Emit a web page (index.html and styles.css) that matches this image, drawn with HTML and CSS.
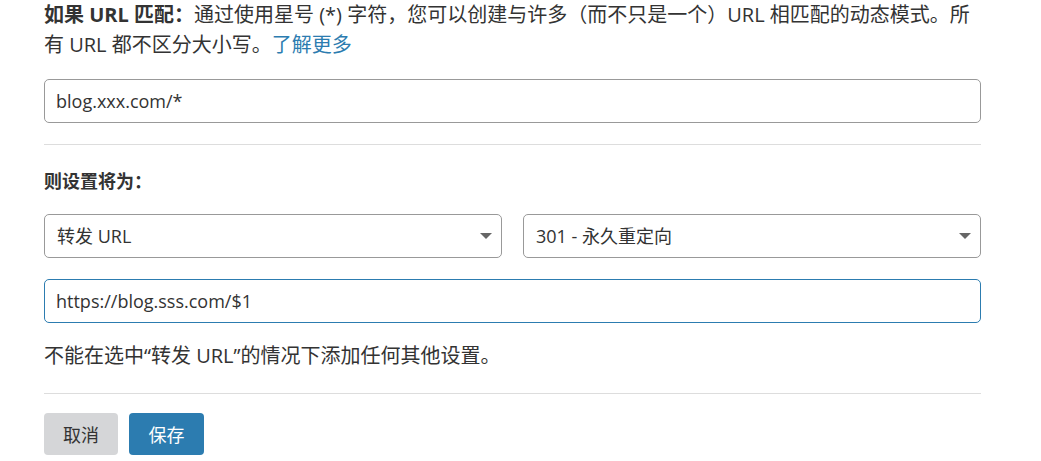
FILE: index.html
```html
<!DOCTYPE html>
<html lang="zh-CN">
<head>
    <meta charset="UTF-8">
    <meta name="viewport" content="width=device-width, initial-scale=1.0">
    <title>页面规则</title>
    <link rel="stylesheet" href="styles.css">
</head>
<body>
    <div class="rule-form">
        <p class="rule-desc">
            <strong>如果 URL 匹配：</strong>通过使用星号 (*) 字符，您可以创建与许多（而不只是一个）URL 相匹配的动态模式。所有 URL 都不区分大小写。<a href="#">了解更多</a>
        </p>

        <input type="text" class="text-input" value="blog.xxx.com/*">

        <hr class="divider divider-top">

        <label class="section-label">则设置将为：</label>

        <div class="select-group">
            <div class="select-wrap">
                <select class="select-input">
                    <option>转发 URL</option>
                </select>
            </div>
            <div class="select-wrap">
                <select class="select-input">
                    <option>301 - 永久重定向</option>
                    <option>302 - 临时重定向</option>
                </select>
            </div>
        </div>

        <input type="text" class="text-input is-focused" value="https://blog.sss.com/$1">

        <p class="help-note">不能在选中“转发 URL”的情况下添加任何其他设置。</p>

        <hr class="divider divider-bottom">

        <div class="actions">
            <button type="button" class="btn btn-cancel">取消</button>
            <button type="submit" class="btn btn-save">保存</button>
        </div>
    </div>
</body>
</html>
```

FILE: styles.css
```css
body {
    margin: 0;
    background: #fff;
    color: #333;
    font-family: "Open Sans", "Noto Sans CJK SC", sans-serif;
    font-size: 18px;
}

.rule-form {
    width: 937px;
    margin-left: 44px;
}

.rule-desc {
    margin: 0;
    font-size: 20px;
    line-height: 30px;
}

.rule-desc strong {
    font-weight: bold;
}

.rule-desc a {
    color: #2c7cb0;
    text-decoration: none;
}

.text-input {
    display: block;
    box-sizing: border-box;
    width: 100%;
    height: 44px;
    margin-top: 19px;
    padding: 0 11px;
    border: 1px solid #999;
    border-radius: 5px;
    font: inherit;
    color: #333;
    outline: none;
}

.text-input.is-focused {
    margin-top: 21px;
    border-color: #2c7cb0;
}

.divider {
    height: 1px;
    margin: 0;
    border: 0;
    background: #ddd;
}

.divider-top {
    margin-top: 21px;
}

.divider-bottom {
    margin-top: 22px;
}

.section-label {
    display: block;
    margin-top: 21px;
    line-height: 30px;
    font-weight: bold;
}

.select-group {
    display: grid;
    grid-template-columns: 1fr 1fr;
    gap: 21px;
    margin-top: 18px;
}

.select-wrap {
    position: relative;
}

.select-wrap::after {
    content: "";
    position: absolute;
    right: 10px;
    top: 19px;
    border-left: 6px solid transparent;
    border-right: 6px solid transparent;
    border-top: 6px solid #666;
    pointer-events: none;
}

.select-input {
    display: block;
    box-sizing: border-box;
    width: 100%;
    height: 44px;
    padding: 0 12px;
    border: 1px solid #999;
    border-radius: 5px;
    background: #fff;
    font: inherit;
    color: #333;
    appearance: none;
    -webkit-appearance: none;
}

.help-note {
    margin: 18px 0 0;
    font-size: 20px;
    line-height: 30px;
}

.actions {
    display: flex;
    gap: 11px;
    margin-top: 19px;
}

.btn {
    width: 74px;
    height: 42px;
    padding: 0;
    border: 0;
    border-radius: 4px;
    font: inherit;
    cursor: pointer;
}

.btn-cancel {
    background: #d5d6d8;
    color: #333;
}

.btn-save {
    width: 75px;
    background: #2c7cb0;
    color: #fff;
}
```
